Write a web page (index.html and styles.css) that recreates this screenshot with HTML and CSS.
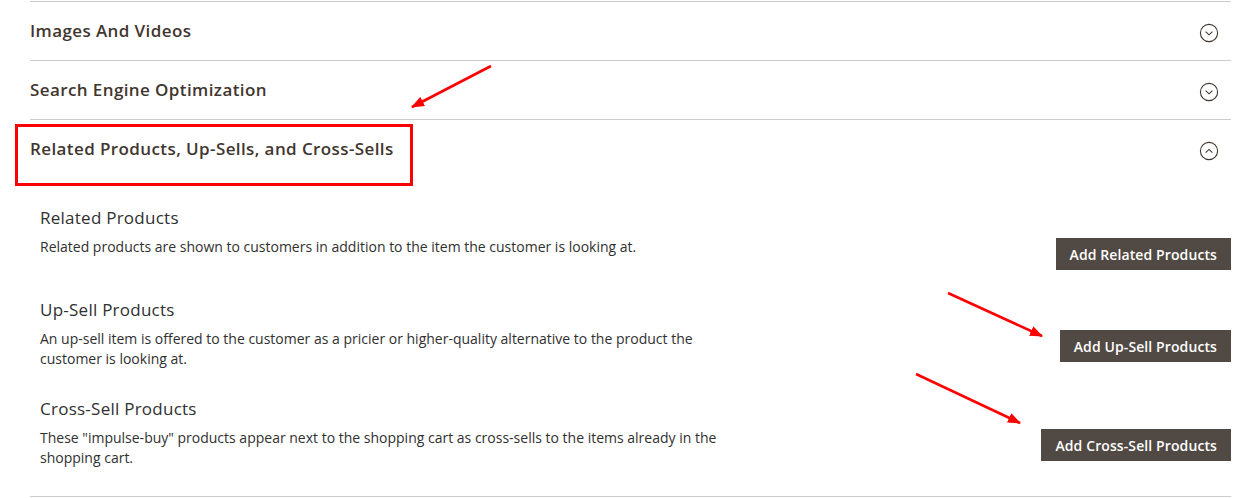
FILE: index.html
```html
<!DOCTYPE html>
<html>
<head>
<meta charset="utf-8">
<link rel="stylesheet" href="styles.css">
</head>
<body>
<div class="page">
  <div class="section">
    <div class="sec-head">
      <span class="sec-title">Images And Videos</span>
      <svg class="toggle" viewBox="0 0 20 20" width="20" height="20"><circle cx="10" cy="10" r="8.6" fill="none" stroke="#41362f" stroke-width="1.1"/><path d="M6.6 8.6 L10 11.8 L13.4 8.6" fill="none" stroke="#41362f" stroke-width="1.1"/></svg>
    </div>
  </div>
  <div class="section">
    <div class="sec-head">
      <span class="sec-title">Search Engine Optimization</span>
      <svg class="toggle" viewBox="0 0 20 20" width="20" height="20"><circle cx="10" cy="10" r="8.6" fill="none" stroke="#41362f" stroke-width="1.1"/><path d="M6.6 8.6 L10 11.8 L13.4 8.6" fill="none" stroke="#41362f" stroke-width="1.1"/></svg>
    </div>
  </div>
  <div class="section open">
    <div class="sec-head">
      <span class="sec-title">Related Products, Up-Sells, and Cross-Sells</span>
      <svg class="toggle" viewBox="0 0 20 20" width="20" height="20"><circle cx="10" cy="10" r="8.6" fill="none" stroke="#41362f" stroke-width="1.1"/><path d="M6.6 11.6 L10 8.4 L13.4 11.6" fill="none" stroke="#41362f" stroke-width="1.1"/></svg>
      <div class="highlight"></div>
    </div>
    <div class="sec-body">
      <div class="block">
        <div class="b-title">Related Products</div>
        <div class="b-row">
          <div class="b-desc">Related products are shown to customers in addition to the item the customer is looking at.</div>
          <button class="btn">Add Related Products</button>
        </div>
      </div>
      <div class="block">
        <div class="b-title">Up-Sell Products</div>
        <div class="b-row">
          <div class="b-desc">An up-sell item is offered to the customer as a pricier or higher-quality alternative to the product the customer is looking at.</div>
          <button class="btn">Add Up-Sell Products</button>
        </div>
      </div>
      <div class="block">
        <div class="b-title">Cross-Sell Products</div>
        <div class="b-row">
          <div class="b-desc">These "impulse-buy" products appear next to the shopping cart as cross-sells to the items already in the shopping cart.</div>
          <button class="btn">Add Cross-Sell Products</button>
        </div>
      </div>
    </div>
  </div>
</div>
<svg class="arrows" width="1242" height="498" viewBox="0 0 1242 498">
  <defs>
    <marker id="ah" markerWidth="5" markerHeight="4" refX="4.6" refY="2" orient="auto" markerUnits="strokeWidth">
      <path d="M0 0 L5 2 L0 4 Z" fill="#f00"/>
    </marker>
  </defs>
  <line x1="491" y1="66" x2="412" y2="107" stroke="#f00" stroke-width="2.6" marker-end="url(#ah)"/>
  <line x1="948" y1="293" x2="1042" y2="336" stroke="#f00" stroke-width="2.6" marker-end="url(#ah)"/>
  <line x1="916" y1="374" x2="1020" y2="423" stroke="#f00" stroke-width="2.6" marker-end="url(#ah)"/>
</svg>
</body>
</html>
```
FILE: styles.css
```css
html, body {
  margin: 0;
  padding: 0;
  background: #fff;
}
body {
  font-family: "Open Sans", "Liberation Sans", sans-serif;
  color: #303030;
  width: 1242px;
  height: 498px;
  overflow: hidden;
  position: relative;
}
.page {
  margin-left: 30px;
  width: 1201px;
  padding-top: 1px;
}
.section {
  border-top: 1px solid #cccccc;
}
.sec-head {
  position: relative;
  height: 58px;
  display: flex;
  align-items: center;
  justify-content: space-between;
  padding-right: 12px;
}
.sec-title {
  font-size: 17px;
  font-weight: 600;
  color: #41362f;
  letter-spacing: 0.4px;
  margin-top: -1px;
}
.toggle {
  margin-top: 3px;
}
.highlight {
  position: absolute;
  left: -15px;
  top: 4px;
  width: 392px;
  height: 56px;
  border: 3px solid #f00;
}
.sec-body {
  padding: 28px 0 28px 10px;
  border-bottom: 1px solid #cccccc;
}
.block {
  margin-bottom: 28px;
}
.block:last-child {
  margin-bottom: 0;
}
.b-title {
  font-size: 17px;
  font-weight: 400;
  color: #303030;
  line-height: 24px;
  letter-spacing: 0.25px;
}
.b-row {
  display: flex;
  justify-content: space-between;
  align-items: flex-start;
  margin-top: 7px;
}
.b-desc {
  width: 690px;
  font-size: 14px;
  color: #303030;
  line-height: 20px;
}
.btn {
  margin-top: 1px;
  background: #514943;
  color: #fff;
  border: 0;
  height: 32px;
  padding: 0 14px;
  font-family: "Open Sans", "Liberation Sans", sans-serif;
  font-size: 14px;
  font-weight: 600;
  letter-spacing: 0.1px;
}
.arrows {
  position: absolute;
  left: 0;
  top: 0;
  pointer-events: none;
}
```
